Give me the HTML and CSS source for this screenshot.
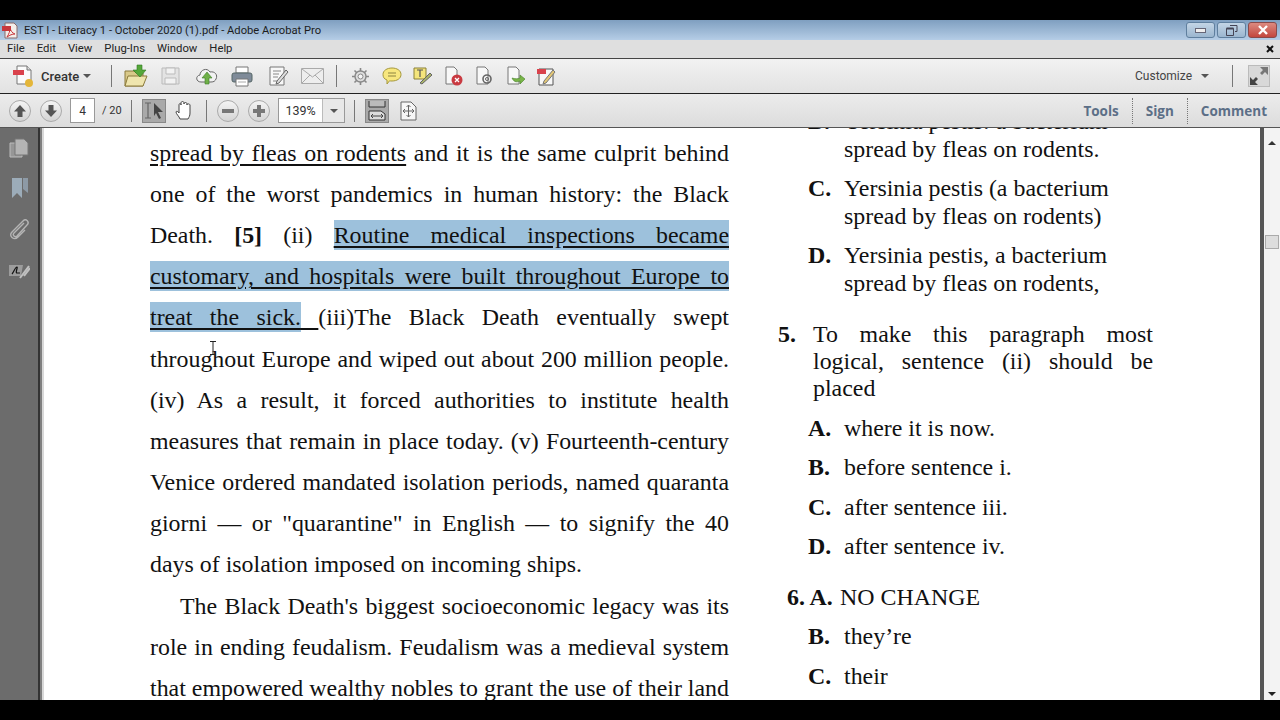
FILE: index.html
```html
<!DOCTYPE html>
<html lang="en">
<head>
  <meta charset="UTF-8" />
  <title>EST I - Literacy 1 - October 2020 (1).pdf - Adobe Acrobat Pro</title>
  <link rel="stylesheet" href="styles.css">
</head>
<body>
  <div class="black-bar"></div>

  <div class="titlebar">
    <svg class="app-icon" width="16" height="17" viewBox="0 0 16 17"><path d="M3 1h9l3 3v12H3z" fill="#f4eeea" stroke="#8a6a6a"/><path d="M0 4h9v5H0z" fill="#c8373c"/><path d="M5 15c2-3 3-6 3-9 1 3 2 5 5 6-3 0-5 1-8 3z" fill="none" stroke="#c8373c"/></svg>
    <span class="title-text">EST I - Literacy 1 - October 2020 (1).pdf - Adobe Acrobat Pro</span>
    <div class="win-buttons">
      <div class="win-btn"><span class="win-min"></span></div>
      <div class="win-btn"><svg width="12" height="11" viewBox="0 0 12 11"><path d="M4 .5h7v6H9M.5 3.5h7v7h-7z" fill="none" stroke="#445"/><path d="M.5 3.5h7" stroke="#445" stroke-width="2"/></svg></div>
      <div class="win-btn win-close"><svg width="12" height="10" viewBox="0 0 12 10"><path d="M2 1l8 8M10 1l-8 8" stroke="#fff" stroke-width="2.4"/></svg></div>
    </div>
  </div>

  <div class="menubar">
    <span>File</span><span>Edit</span><span>View</span><span>Plug-Ins</span><span>Window</span><span>Help</span>
    <svg class="menu-close" width="8" height="8" viewBox="0 0 8 8"><path d="M1 1l6 6M7 1l-6 6" stroke="#111" stroke-width="2"/></svg>
  </div>

  <div class="toolbar">
    <svg width="22" height="24" viewBox="0 0 22 24"><path d="M5 2h10l4 4v14H5z" fill="#fbfbfb" stroke="#777"/><path d="M15 2v4h4" fill="#ddd" stroke="#777"/><rect x="1" y="6" width="11" height="5" fill="#d9424c"/><circle cx="17" cy="19" r="4" fill="#e4b63a"/></svg>
    <span class="create-label">Create</span>
    <span class="caret"></span>
    <span class="sep sep-a"></span>
    <svg class="t-open" width="24" height="24" viewBox="0 0 24 24"><path d="M1 7h9l2 2h7v13H1z" fill="#d9c98a" stroke="#8b7a3c"/><path d="M4 12h19l-4 10H1z" fill="#efe5ae" stroke="#8b7a3c"/><path d="M13 1h5v5h4l-6 7-7-7h4z" fill="#55a73a" stroke="#2f7a22" stroke-width=".6"/></svg>
    <svg class="t-save" width="19" height="18" viewBox="0 0 19 18"><path d="M1 1h17v16H1z" fill="#e3e3e3" stroke="#bbb"/><path d="M5 1h9v6H5zM4 11h11v6H4z" fill="#f2f2f2" stroke="#bbb"/></svg>
    <svg class="t-cloud" width="24" height="20" viewBox="0 0 24 20"><path d="M6 16C1 16 0 10 5 9c0-5 7-8 10-3 5-1 8 3 6 7-1 2-2 3-5 3z" fill="#f2f2f2" stroke="#666"/><path d="M12 6l5 6h-3v6h-4v-6H7z" fill="#6fb048" stroke="#3e7d28" stroke-width=".6"/></svg>
    <svg class="t-print" width="22" height="21" viewBox="0 0 22 21"><path d="M5 1h12v6H5z" fill="#fff" stroke="#777"/><rect x="1" y="7" width="20" height="9" rx="2" fill="#7f8b99" stroke="#566"/><path d="M5 13h12v7H5z" fill="#fff" stroke="#777"/><path d="M7 16h8" stroke="#aaa"/></svg>
    <svg class="t-edit" width="20" height="20" viewBox="0 0 20 20"><path d="M1 1h14v18H1z" fill="#f8f8f8" stroke="#777"/><path d="M4 5h8M4 8h6M4 11h5M4 15h5" stroke="#888"/><path d="M8 15l9-11 2 2-9 11-3 1z" fill="#ddd" stroke="#666"/></svg>
    <svg class="t-mail" width="23" height="16" viewBox="0 0 23 16"><path d="M.5.5h22v15H.5z" fill="#eee" stroke="#aaa"/><path d="M1 1l10.500 8L22 1M1 15l8-8M22 15l-8-8" fill="none" stroke="#aaa"/></svg>
    <span class="sep sep-b"></span>
    <svg class="t-gear" width="17" height="17" viewBox="0 0 17 17"><circle cx="8.500" cy="8.500" r="5.500" fill="#ddd" stroke="#888" stroke-width="1.400"/><circle cx="8.500" cy="8.500" r="2.500" fill="#f4f4f4" stroke="#888"/><path d="M8.500 0v3M8.500 14v3M0 8.500h3M14 8.500h3M2.500 2.500l2 2M12.500 12.500l2 2M14.500 2.500l-2 2M4.500 12.500l-2 2" stroke="#888" stroke-width="1.600"/></svg>
    <svg class="t-bubble" width="20" height="18" viewBox="0 0 20 18"><path d="M10 1c5 0 9 2.500 9 6.500S15 14 10 14c-1 0-2 0-2.500-.2L5 17v-4C2 12 1 10 1 7.500 1 3.500 5 1 10 1z" fill="#f7e77e" stroke="#a5983d"/><path d="M6 6h8M6 9h8" stroke="#8d8440"/></svg>
    <svg class="t-note" width="20" height="18" viewBox="0 0 20 18"><path d="M1 1h12v11H1z" fill="#f4e57c" stroke="#8a8038"/><path d="M4 3h6M7 3v7" stroke="#555" stroke-width="1.200"/><path d="M7 16l10-10 2 2-10 9z" fill="#a9b36a" stroke="#666"/></svg>
    <svg class="t-doc" width="18" height="20" viewBox="0 0 18 20"><path d="M1 1h8l3 3v14H1z" fill="#f8f8f8" stroke="#777"/><circle cx="12" cy="14" r="5.500" fill="#c93a41"/><path d="M10 12l4 4M14 12l-4 4" stroke="#fff" stroke-width="1.300"/></svg>
    <svg class="t-doc2" width="18" height="20" viewBox="0 0 18 20"><path d="M1 1h8l3 3v14H1z" fill="#f8f8f8" stroke="#777"/><circle cx="11" cy="13" r="4" fill="none" stroke="#666" stroke-width="1.600"/><circle cx="11" cy="13" r="1.500" fill="none" stroke="#666"/></svg>
    <svg class="t-doc2" width="19" height="20" viewBox="0 0 19 20"><path d="M1 1h8l3 3v14H1z" fill="#f8f8f8" stroke="#777"/><path d="M5 12c2 5 6 4 8 3v3l5-5-5-4v3c-2 1-5 1-8 0z" fill="#79b548" stroke="#47802a" stroke-width=".6"/></svg>
    <svg class="t-sign" width="19" height="20" viewBox="0 0 19 20"><path d="M2 3h14v16H2z" fill="#f8f8f8" stroke="#555"/><rect x="0" y="3" width="9" height="5" fill="#d9424c"/><path d="M7 15l9-11 2 2-9 11-3 1z" fill="#e3c776" stroke="#777"/></svg>
    <span class="spacer"></span>
    <span class="customize">Customize</span>
    <span class="caret caret-c"></span>
    <span class="sep sep-c"></span>
    <div class="expand"><svg width="20" height="20" viewBox="0 0 20 20"><path d="M19 1v8l-3-3-3 3-2-2 3-3-3-3z" fill="#777"/><path d="M1 19v-8l3 3 3-3 2 2-3 3 3 3z" fill="#444"/></svg></div>
  </div>

  <div class="navbar">
    <div class="round-btn"><svg width="14" height="14" viewBox="0 0 14 14"><path d="M7 1l6 6.500H9.500V13h-5V7.500H1z" fill="#555"/></svg></div>
    <div class="round-btn"><svg width="14" height="14" viewBox="0 0 14 14"><path d="M7 13L1 6.500h3.500V1h5v5.500H13z" fill="#555"/></svg></div>
    <div class="page-box">4</div>
    <span class="page-total">/ 20</span>
    <span class="sep sep-n"></span>
    <div class="tool-active"><svg width="22" height="19" viewBox="0 0 22 19"><path d="M2 2h6M2 17h6M5 2v15" stroke="#666" stroke-width="1.200" fill="none"/><path d="M11 2l9 9h-5l3 6-2 1-3-6-2 3z" fill="#444"/></svg></div>
    <svg class="t-hand" width="20" height="20" viewBox="0 0 20 20"><path d="M5 18c-1-3-4-5-4-7 0-1 2-1 3 1V4c0-2 2-2 2 0V2c0-2 3-2 3 0v1c0-2 3-2 3 0v1c0-2 3-1 3 0v8c0 3-1 4-2 6z" fill="#fff" stroke="#444"/></svg>
    <span class="sep sep-h"></span>
    <div class="round-btn"><span class="minus"></span></div>
    <div class="round-btn"><span class="plus"></span></div>
    <div class="zoom-box"><span class="zoom-val">139%</span><span class="zoom-drop"><span class="caret"></span></span></div>
    <span class="sep sep-z"></span>
    <div class="tool-active"><svg width="20" height="21" viewBox="0 0 20 21"><path d="M2 1v6h16V1" fill="#bbb" stroke="#333"/><path d="M2 11h12l4 3v6H2z" fill="#ddd" stroke="#333"/><path d="M4 16h12M4 16l2-2M4 16l2 2M16 16l-2-2M16 16l-2 2" stroke="#444" fill="none"/></svg></div>
    <svg class="t-fit" width="17" height="20" viewBox="0 0 17 20"><path d="M1 1h10l5 5v13H1z" fill="#f6f6f6" stroke="#666"/><path d="M3 10h11M8.500 4v12M3 10l2-2M3 10l2 2M14 10l-2-2M14 10l-2 2M8.500 4l-2 2M8.500 4l2 2M8.500 16l-2-2M8.500 16l2-2" stroke="#666" fill="none"/></svg>
    <span class="spacer"></span>
    <a class="tab">Tools</a><a class="tab">Sign</a><a class="tab">Comment</a>
  </div>

  <div class="main">
    <div class="sidebar">
      <svg width="20" height="20" viewBox="0 0 20 20"><path d="M1 5h12v14H1z" fill="#969696" stroke="#bbb"/><path d="M6 1h9l4 4v12H6z" fill="#b4b4b4" stroke="#777"/></svg>
      <svg width="17" height="22" viewBox="0 0 17 22"><path d="M1 1h10v20l-5-5-5 5z" fill="#9cacb9"/><path d="M12 1h5v15l-5-4z" fill="#8d9aa6"/></svg>
      <svg width="21" height="22" viewBox="0 0 21 22"><path d="M15 5L5 15c-2 2 1 5 3 3L18 7c3-3-1-7-4-4L3 14c-4 4 2 9 6 5l7-7" fill="none" stroke="#b5b5b5" stroke-width="1.400"/></svg>
      <svg class="side-sign" width="21" height="16" viewBox="0 0 21 16"><path d="M0 2h14l-2 11H0z" fill="#9c9c9c"/><path d="M3 11c2-2 3-7 5-7 1 0-2 6 0 6h3" stroke="#111" stroke-width="1.200" fill="none"/><path d="M11 15L20 3M15 13l6-8" stroke="#c0c0c0" stroke-width="2"/></svg>
    </div>
    <div class="divider"></div>

    <div class="page">
      <div class="col-left">
        <p class="line"><u>spread by fleas on rodents</u> and it is the same culprit behind</p>
        <p class="line">one of the worst pandemics in human history: the Black</p>
        <p class="line">Death. <b>[5]</b> (ii) <mark>Routine medical inspections became</mark></p>
        <p class="line"><mark>customary, and hospitals were built throughout Europe to</mark></p>
        <p class="line"><mark>treat the sick.</mark><u> </u>(iii)The Black Death eventually swept</p>
        <p class="line">throughout Europe and wiped out about 200 million people.</p>
        <p class="line">(iv) As a result, it forced authorities to institute health</p>
        <p class="line">measures that remain in place today. (v) Fourteenth-century</p>
        <p class="line">Venice ordered mandated isolation periods, named quaranta</p>
        <p class="line">giorni — or "quarantine" in English — to signify the 40</p>
        <p class="line last">days of isolation imposed on incoming ships.</p>
        <p class="line indent">The Black Death's biggest socioeconomic legacy was its</p>
        <p class="line">role in ending feudalism. Feudalism was a medieval system</p>
        <p class="line">that empowered wealthy nobles to grant the use of their land</p>
      </div>

      <div class="col-right">
        <div class="opt"><b>B.</b><span>Yersinia pestis: a bacterium<br>spread by fleas on rodents.</span></div>
        <div class="opt"><b>C.</b><span>Yersinia pestis (a bacterium<br>spread by fleas on rodents)</span></div>
        <div class="opt"><b>D.</b><span>Yersinia pestis, a bacterium<br>spread by fleas on rodents,</span></div>
        <div class="question">
          <b>5.</b>
          <div class="q-text">
            <p class="q-line">To make this paragraph most</p>
            <p class="q-line">logical, sentence (ii) should be</p>
            <p class="q-line last">placed</p>
          </div>
        </div>
        <div class="opt"><b>A.</b><span>where it is now.</span></div>
        <div class="opt"><b>B.</b><span>before sentence i.</span></div>
        <div class="opt"><b>C.</b><span>after sentence iii.</span></div>
        <div class="opt"><b>D.</b><span>after sentence iv.</span></div>
        <div class="opt opt-six"><b>6. A.</b><span>NO CHANGE</span></div>
        <div class="opt"><b>B.</b><span>they’re</span></div>
        <div class="opt"><b>C.</b><span>their</span></div>
      </div>

      <svg class="cursor" width="8" height="14" viewBox="0 0 8 14"><path d="M1 .5h6M1 13.500h6M4 .5v13" stroke="#222" fill="none"/></svg>
    </div>

    <div class="divider-r"></div>
    <div class="scrollbar">
      <span class="arrow-up"></span>
      <span class="thumb"></span>
      <span class="arrow-down"></span>
    </div>
  </div>

  <div class="black-bar"></div>
</body>
</html>
```

FILE: styles.css
```css
html, body {
  margin: 0;
  height: 720px;
  overflow: hidden;
}

body {
  display: flex;
  flex-direction: column;
  background: #000;
  font-family: Roboto, "Liberation Sans", sans-serif;
}

.black-bar {
  height: 20px;
  background: #000;
  flex: none;
}

/* Title and menu */
.titlebar {
  height: 20px;
  flex: none;
  display: flex;
  align-items: center;
  padding-left: 2px;
  background: linear-gradient(#7f9fc0, #b5cde6);
  font-size: 11.2px;
  color: #1c1c1c;
}

.app-icon {
  margin-right: 6px;
}

.win-buttons {
  margin-left: auto;
  margin-right: 3px;
  display: flex;
  gap: 2px;
  align-self: flex-start;
  margin-top: 2px;
}

.win-btn {
  width: 27px;
  height: 14px;
  display: flex;
  align-items: center;
  justify-content: center;
  border: 1px solid #5f7f9e;
  border-radius: 3px;
  background: linear-gradient(#c3d5e6, #9bb6cf);
}

.win-min {
  width: 9px;
  height: 3px;
  border: 1px solid #667;
  background: #eee;
}

.win-close {
  border-color: #8a4a4a;
  background: linear-gradient(#dc8a80, #c3473e);
}

.menubar {
  height: 17px;
  padding-bottom: 1px;
  flex: none;
  display: flex;
  align-items: center;
  gap: 12px;
  padding-left: 7px;
  background: #dfdfdf;
  font-size: 11.3px;
  color: #222;
  border-bottom: 1px solid #444;
}

.menu-close {
  margin-left: auto;
  margin-right: 6px;
}

/* Toolbars */
.toolbar {
  height: 34px;
  flex: none;
  display: flex;
  align-items: center;
  padding-left: 12px;
  background: linear-gradient(#f2f2f2, #e2e2e2);
  border-bottom: 1px solid #222;
}

.create-label {
  margin-left: 7px;
  width: 37px;
  font-size: 13px;
  font-weight: 500;
  color: #333;
}

.caret {
  display: inline-block;
  width: 0;
  height: 0;
  margin-left: 5px;
  border-left: 4px solid transparent;
  border-right: 4px solid transparent;
  border-top: 4px solid #555;
}

.sep {
  width: 1px;
  height: 22px;
  background: #777;
}

.sep-a { margin: 0 12px 0 20px; }
.t-save { margin-left: 13px; }
.t-cloud { margin-left: 15px; }
.t-print { margin-left: 12px; }
.t-edit { margin-left: 16px; }
.t-mail { margin-left: 12px; }
.sep-b { margin: 0 15px 0 12px; }
.t-bubble { margin-left: 13px; }
.t-note { margin-left: 11px; }
.t-doc { margin-left: 12px; }
.t-doc2 { margin-left: 13px; }
.t-sign { margin-left: 11px; }

.spacer {
  flex: 1;
}

.customize {
  font-size: 12px;
  color: #444;
}

.caret-c {
  margin-left: 9px;
}

.sep-c {
  margin: 0 15px 0 23px;
}

.expand {
  width: 22px;
  height: 22px;
  box-sizing: border-box;
  margin-right: 10px;
  display: flex;
  align-items: center;
  justify-content: center;
  background: #d8d8d8;
  border: 1px solid #bbb;
}

.navbar {
  height: 33px;
  flex: none;
  display: flex;
  align-items: center;
  padding-left: 9px;
  background: linear-gradient(#ececec, #dcdcdc);
  border-bottom: 1px solid #555;
  font-size: 12px;
  color: #333;
}

.round-btn {
  width: 22px;
  height: 22px;
  box-sizing: border-box;
  margin-right: 9px;
  display: flex;
  align-items: center;
  justify-content: center;
  border: 1px solid #aaa;
  border-radius: 50%;
  background: linear-gradient(#f4f4f4, #d4d4d4);
}

.page-box {
  width: 25px;
  height: 25px;
  box-sizing: border-box;
  margin-left: -1px;
  display: flex;
  align-items: center;
  justify-content: center;
  background: #fff;
  border: 1px solid #999;
  font-size: 12px;
}

.page-total {
  width: 20px;
  margin-left: 7px;
  font-size: 11px;
  white-space: nowrap;
}

.sep-n { margin: 0 10px 0 9px; }
.sep-h { margin: 0 10px 0 11px; }
.sep-z { margin: 0 10px 0 9px; }

.tool-active {
  width: 24px;
  height: 24px;
  box-sizing: border-box;
  display: flex;
  align-items: center;
  justify-content: center;
  background: #a9a9a9;
  border: 1px solid #888;
}

.t-hand {
  margin-left: 9px;
}

.t-fit {
  margin-left: 11px;
}

.minus,
.plus {
  display: block;
  width: 12px;
  height: 4px;
  background: #777;
}

.plus {
  position: relative;
}

.plus::after {
  content: "";
  position: absolute;
  left: 4px;
  top: -4px;
  width: 4px;
  height: 12px;
  background: #777;
}

.zoom-box {
  width: 67px;
  height: 25px;
  box-sizing: border-box;
  display: flex;
  background: #fff;
  border: 1px solid #999;
  margin-left: -1px;
}

.zoom-val {
  flex: 1;
  text-align: center;
  line-height: 23px;
  font-size: 12.5px;
}

.zoom-drop {
  width: 21px;
  display: flex;
  align-items: center;
  justify-content: center;
  background: #e8e8e8;
  border-left: 1px solid #bbb;
}

.zoom-drop .caret {
  margin: 0;
}

.tab {
  font-family: "Open Sans", sans-serif;
  font-size: 13.5px;
  font-weight: 700;
  color: #5c6f87;
  padding: 4px 13px;
  border-right: 1px dotted #777;
}

.tab:last-child {
  border-right: none;
  padding-right: 13px;
}

/* Main area */
.main {
  flex: 1;
  display: flex;
  min-height: 0;
}

.sidebar {
  width: 38px;
  flex: none;
  display: flex;
  flex-direction: column;
  align-items: center;
  gap: 19px;
  padding-top: 10px;
  box-sizing: border-box;
  background: #6c6c6c;
}

.side-sign {
  margin-top: 4px;
}

.divider {
  width: 6px;
  flex: none;
  background: linear-gradient(to right, #333 0 2px, #808080 2px 4px, #d8d8d8 4px);
}

.divider-r {
  width: 4px;
  flex: none;
  background: #555;
}

.page {
  flex: 1;
  position: relative;
  display: flex;
  overflow: hidden;
  background: #fff;
  font-family: "Liberation Serif", serif;
  font-size: 23.9px;
  color: #111;
}

.col-left {
  width: 579px;
  margin-left: 106px;
  margin-top: 4.6px;
  flex: none;
}

.line {
  margin: 0;
  height: 41.2px;
  line-height: 41.2px;
  text-align: justify;
  text-align-last: justify;
  white-space: nowrap;
}

.line.last,
.q-line.last {
  text-align-last: left;
}

.indent {
  text-indent: 30px;
}

u,
mark {
  text-decoration: underline;
  text-underline-offset: 3px;
}

mark {
  background: #9dc1dc;
  color: #111;
  padding: 2px 0;
}

.col-right {
  width: 400px;
  margin-left: 49px;
  margin-top: -20px;
  flex: none;
}

.opt {
  display: flex;
  line-height: 27.5px;
  margin-bottom: 12px;
  padding-left: 30px;
}

.opt b {
  width: 36px;
  flex: none;
}

.opt-six {
  margin-top: 23px;
  padding-left: 9px;
}

.opt-six b {
  width: 53px;
}

.question {
  display: flex;
  line-height: 27.2px;
  margin: 24px 0 12px;
}

.question > b {
  width: 35px;
  flex: none;
}

.q-text {
  width: 340px;
}

.q-line {
  margin: 0;
  text-align: justify;
  text-align-last: justify;
}

.cursor {
  position: absolute;
  left: 165px;
  top: 213px;
}

.scrollbar {
  width: 16px;
  flex: none;
  position: relative;
  background: #f3f3f3;
}

.arrow-up,
.arrow-down {
  position: absolute;
  left: 4px;
  width: 0;
  height: 0;
  border-left: 4px solid transparent;
  border-right: 4px solid transparent;
}

.arrow-up {
  top: 13px;
  border-bottom: 4px solid #333;
}

.arrow-down {
  bottom: 4px;
  border-top: 4px solid #222;
}

.thumb {
  position: absolute;
  left: 1px;
  top: 107px;
  width: 12px;
  height: 12px;
  background: #ddd;
  border: 1px solid #aaa;
}
```
